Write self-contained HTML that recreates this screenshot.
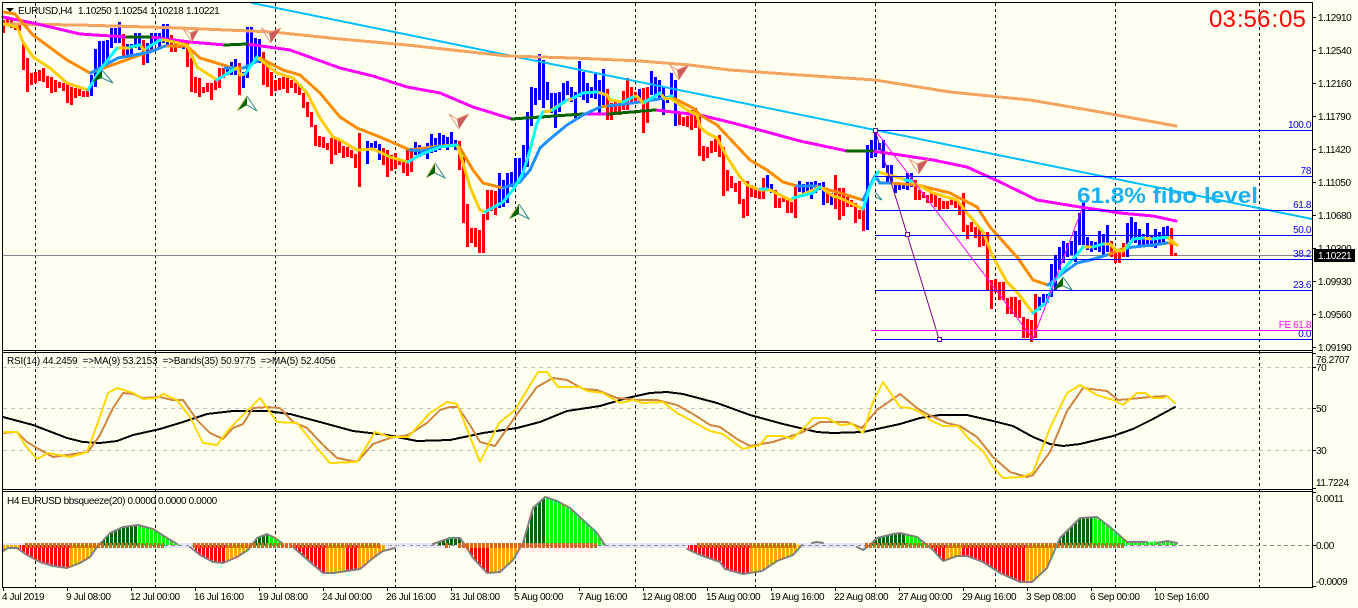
<!DOCTYPE html>
<html><head><meta charset="utf-8"><title>EURUSD,H4</title>
<style>
html,body{margin:0;padding:0;background:#FFFFF0;width:1358px;height:608px;overflow:hidden}
svg{display:block}
text{font-family:"Liberation Sans",sans-serif;font-size:10px;letter-spacing:-.4px;fill:#000}
.c{shape-rendering:crispEdges}
.l{fill:none;stroke-linejoin:round;stroke-linecap:round}
.f{fill:#0000FF;text-anchor:end}
</style></head><body>
<svg width="1358" height="608" viewBox="0 0 1358 608" xmlns="http://www.w3.org/2000/svg">
<defs>
<clipPath id="hc"><path d="M3 545L3 551 8 548 17 548 27 555 40 562 53 566 67 568 80 563 90 557 97 547 110 533 123 527 138 525 153 529 167 538 177 544 190 547 200 555 213 562 223 563 237 557 248 550 257 538 267 534 275 538 283 544 293 547 310 562 323 573 333 573 347 571 360 569 373 558 383 551 400 548 413 549 433 544 450 538 460 538 465 545 473 558 487 573 500 572 513 560 523 543 533 508 545 497 557 501 570 508 583 520 597 533 605 545 685 545 687 549 700 555 720 562 725 569 743 574 762 571 777 561 793 555 802 545 853 545 863 550 877 538 893 534 900 533 917 537 927 545 933 550 943 561 957 556 967 556 983 562 1000 573 1020 582 1032 582 1047 568 1060 538 1080 518 1097 517 1110 527 1127 542 1147 542 1167 541 1177 543 1177 545Z"/></clipPath>
</defs>
<rect width="1358" height="608" fill="#FFFFF0"/>

<!-- grid -->
<path class="c" stroke="#000" stroke-dasharray="3 3" fill="none" d="M35.5 3V587M155.5 3V587M275.5 3V587M395.5 3V587M515.5 3V587M635.5 3V587M755.5 3V587M875.5 3V587M995.5 3V587M1115.5 3V587M1259.5 3V587"/>

<!-- price line -->
<path class="c" stroke="#808890" d="M3 255.5H1312"/>

<!-- bars -->
<g class="c" fill="none" stroke-width="3" transform="translate(.5 0)">
<path stroke="#FF0000" d="M3 20V33M7 18V26M11 20V28M15 24V30M19 25V31M23 43V70M27 58V92M31 73V85M35 72V83M39 70V81M43 68V82M47 76V88M51 77V93M55 80V92M59 82V88M63 83V91M67 84V103M71 87V105M75 88V98M79 89V96M83 91V97M87 91V97M123 34V57M143 40V65M171 35V52M175 42V52M179 44V48M187 43V67M191 58V92M195 77V93M199 78V97M203 87V93M207 83V92M211 83V100M215 80V90M219 68V88M223 68V78M239 63V95M263 52V85M267 65V87M271 72V96M275 80V91M279 78V90M283 77V89M287 78V93M291 80V88M295 83V93M299 85V95M303 93V108M307 102V117M311 112V127M315 125V146M319 136V147M323 137V148M327 143V150M331 138V164M335 138V155M339 140V153M343 146V158M347 147V157M351 150V158M355 154V168M359 133V187M383 148V165M387 150V177M391 155V171M395 153V169M399 160V165M403 162V173M407 150V176M411 148V172M459 141V170M463 157V223M467 204V247M471 228V243M475 228V247M479 230V253M483 214V253M487 190V220M491 190V211M495 191V215M607 89V120M611 103V120M615 102V112M619 103V115M623 91V110M627 78V110M631 87V103M635 92V102M643 88V133M647 87V123M679 113V125M683 117V126M687 116V127M691 110V130M695 108V128M699 117V156M703 146V161M707 147V158M711 141V153M715 139V152M719 135V157M723 147V196M727 170V191M731 176V188M735 183V192M739 181V204M743 199V218M747 181V216M751 185V197M755 187V198M759 190V199M763 178V199M775 190V208M779 198V208M783 198V202M787 200V213M791 202V213M795 186V218M827 192V203M835 175V209M839 188V220M843 188V216M847 197V207M851 200V207M855 203V223M859 210V219M863 208V231M915 180V200M919 190V200M923 192V198M927 195V203M931 192V203M935 193V207M939 198V211M943 201V209M947 201V209M951 199V205M955 199V208M959 203V215M963 193V232M967 225V239M971 222V232M975 227V238M979 228V247M983 232V246M987 232V290M991 280V309M995 279V292M999 282V300M1003 282V300M1007 298V314M1011 297V314M1015 297V317M1019 300V318M1023 317V338M1027 319V338M1031 320V342M1035 294V338M1111 241V257M1115 252V263M1119 252V263M1123 243V257M1171 228V256M1175 253V256"/>
<path stroke="#0000FF" d="M91 75V96M95 49V87M99 41V77M103 41V68M107 40V67M111 28V48M115 28V43M119 22V43M127 44V57M131 44V55M135 33V48M139 33V50M147 43V63M151 33V50M155 33V43M159 33V47M163 24V43M167 24V45M183 40V49M227 65V75M231 62V75M235 59V75M243 72V88M247 27V78M251 27V63M255 38V58M259 39V63M367 141V164M371 143V150M375 141V148M379 144V160M415 142V155M419 145V157M423 149V155M427 143V159M431 134V153M435 138V152M439 133V150M443 135V148M447 137V150M451 132V147M455 140V150M499 173V208M503 180V207M507 173V203M511 172V187M515 158V187M519 158V180M523 145V175M527 112V167M531 87V126M535 88V105M539 54V100M543 60V108M547 82V100M551 93V113M555 93V128M559 92V112M563 83V103M567 81V95M571 87V102M575 92V118M579 61V97M583 72V100M587 83V103M591 87V98M595 74V99M599 80V113M603 69V107M639 89V103M651 71V95M655 77V97M659 80V100M663 87V115M667 98V103M671 73V97M675 80V126M767 175V190M771 184V193M799 181V192M803 184V193M807 182V195M811 182V199M815 181V193M819 183V190M823 182V205M831 193V205M867 145V230M871 140V158M875 133V157M879 143V150M883 140V168M887 165V184M891 165V184M895 185V193M899 185V190M903 183V189M907 173V190M911 173V187M1039 297V310M1043 294V303M1047 294V303M1051 264V297M1055 255V290M1059 247V270M1063 241V263M1067 243V257M1071 241V255M1075 231V262M1079 213V245M1083 202V245M1087 237V250M1091 241V252M1095 242V250M1099 231V252M1103 234V255M1107 225V252M1127 223V257M1131 217V243M1135 222V243M1139 229V245M1143 234V245M1147 223V245M1151 235V247M1155 229V248M1159 232V243M1163 227V242M1167 226V238"/>
</g>

<!-- trend line -->
<path class="c l" stroke="#00BFFF" stroke-width="2" d="M252 3L1312 219"/>

<!-- MAs -->
<path class="c l" stroke="#F4A460" stroke-width="3" d="M3 24L80 25 180 28 273 32 340 39 407 45 507 56 573 58 640 61 690 65 730 70 800 75 875 80 950 92 1030 100 1100 112 1176 126"/>
<path class="c l" stroke="#FF00FF" stroke-width="3" d="M3 17L33 23 80 34 127 37 150 37 190 42 225 45 247 44 290 50 340 68 373 76 407 87 440 93 473 107 512 119 583 114 608 114 655 110 700 115 733 123 767 132 800 141 847 151 872 151 900 155 933 160 967 167 1000 182 1037 200 1080 207 1120 213 1153 216 1176 221"/>
<path class="c l" stroke="#006400" stroke-width="3" d="M127 37H150M225 45L247 44M512 119L583 114M608 114L655 110M847 151H872"/>
<path class="c l" stroke="#FF8C00" stroke-width="3" d="M3 12L15 14 33 35 67 60 90 73 165 46 187 46 200 58 233 68 243 68 258 61 260 58 283 70 300 75 320 93 340 117 357 128 380 137 410 150 440 146 457 145 460 148 473 170 483 183 503 188 520 182 530 170 540 148 550 139 567 125 583 115 600 107 625 104 640 102 653 100 670 97 673 98 693 108 700 115 717 125 733 142 750 160 767 170 783 182 797 186 815 186 840 193 863 200 875 176 880 183 890 183 917 185 950 193 977 207 990 227 1017 257 1033 280 1048 285 1063 273 1077 263 1090 260 1107 255 1125 248 1143 246 1153 245 1167 243 1176 244"/>
<path class="c l" stroke="#1E90FF" stroke-width="3" d="M91 73L105 65 118 58 135 55 150 52 165 46M225 68H235M243 68L258 61M410 150L423 151 440 146M503 188L520 182 530 170 540 148 550 139 567 125 583 115 600 107M608 106L625 104 640 102M645 101L653 100 670 97M797 186L815 186M863 200L875 176 880 183 890 183M1048 285L1063 273 1077 263 1090 260 1107 255M1125 248L1143 246 1153 245 1167 243"/>
<path class="c l" stroke="#FFCC00" stroke-width="3" d="M3 24L17 27 23 42 33 57 50 68 67 83 88 90 100 70 117 48 128 48 140 45 144 50 147 48 160 40 165 40 187 45 197 67 217 80 233 70 237 68 240 75 245 74 257 57 277 73 293 78 307 93 320 118 333 137 340 140 357 150 373 149 390 157 408 162 420 155 440 147 457 145 463 163 470 187 480 210 485 212 503 202 513 190 523 173 530 150 537 123 543 112 550 111 567 100 572 99 583 93 597 92 607 95 610 100 623 102 633 97 637 96 643 103 660 93 665 99 670 98 687 110 697 115 700 127 707 133 717 138 727 157 740 177 747 185 760 190 770 190 790 200 820 187 833 196 840 198 863 209 870 187 878 172 900 178 910 181 933 193 957 200 967 213 983 232 993 257 1007 282 1017 292 1033 313 1047 302 1053 283 1063 270 1075 257 1083 247 1093 247 1103 244 1110 244 1117 251 1123 251 1133 239 1143 238 1153 239 1167 237 1177 245"/>
<path class="c l" stroke="#00FFFF" stroke-width="3" d="M88 90L100 70 117 48M130 47L140 45M147 48L160 40M217 80L233 70M245 74L257 57M408 162L420 155 440 147 457 145M485 212L503 202 513 190 523 173 530 150 537 123 543 112M553 110L567 100M573 98L583 93 597 92M623 102L633 97M645 102L660 93M670 96L672 96M760 189L767 189M793 198L813 193 820 187M863 209L870 187 878 172M905 180L912 181M1033 313L1047 302 1053 283 1063 270 1075 257 1083 247M1093 247L1103 244M1127 248L1133 239 1143 238M1153 239L1167 237"/>

<!-- arrows -->
<g>
<path fill="#006400" d="M102 70L92 82 102 78Z"/><path fill="none" stroke="#2E8B8B" d="M102 70L113 83 102 78"/>
<path fill="#006400" d="M247 96L237 111 247 105Z"/><path fill="none" stroke="#2E8B8B" d="M247 96L257 111 247 105"/><path fill="none" stroke="#BDB76B" d="M237 111L247 96"/>
<path fill="#006400" d="M435 163L426 178 435 173Z"/><path fill="none" stroke="#2E8B8B" d="M435 163L445 178 435 173"/><path fill="none" stroke="#BDB76B" d="M426 178L435 163"/>
<path fill="#006400" d="M519 204L509 219 519 214Z"/><path fill="none" stroke="#2E8B8B" d="M519 204L529 219 519 214"/><path fill="none" stroke="#BDB76B" d="M509 219L519 204"/>
<path fill="#006400" d="M1063 277L1053 290 1063 286Z"/><path fill="none" stroke="#2E8B8B" d="M1063 277L1072 290 1063 286"/>
<path fill="none" stroke="#2E8B8B" d="M875 192L882 200 875 197"/>
<path fill="#CD5C5C" d="M199 29L192 42 190 33Z"/><path fill="none" stroke="#E9967A" d="M199 29L190 33 183 29 192 42"/>
<path fill="#CD5C5C" d="M281 28L271 43 269 33Z"/><path fill="none" stroke="#E9967A" d="M281 28L269 33 261 28 271 43"/>
<path fill="#CD5C5C" d="M469 114L459 129 457 119Z"/><path fill="none" stroke="#E9967A" d="M469 114L457 119 449 114 459 129"/>
<path fill="#CD5C5C" d="M689 65L679 80 677 70Z"/><path fill="none" stroke="#E9967A" d="M689 65L677 70 670 65 679 80"/>
<path fill="#CD5C5C" d="M929 159L919 174 917 164Z"/><path fill="none" stroke="#E9967A" d="M929 159L917 164 909 159 919 174"/>
</g>

<!-- fibo -->
<path class="c" stroke="#0000FF" d="M875 130.5H1312M875 176.5H1312M875 210.5H1312M875 235.5H1312M875 259.5H1312M875 290.5H1312M875 339.5H1312"/>
<path class="c" stroke="#FF00FF" d="M871 330.5H1312"/>
<path fill="none" stroke="#FF00FF" stroke-width="1" d="M875 130L1033 339 1083 206"/>
<path fill="none" stroke="#800080" stroke-width="1" d="M875 130L907 234 939 339"/>
<path class="c" fill="#FFFFF0" stroke="#800080" d="M873.5 128.5h4v4h-4zM905.5 232.5h4v4h-4zM937.5 337.5h4v4h-4z"/>
<text class="f" x="1311" y="128">100.0</text>
<text class="f" x="1311" y="174">78</text>
<text class="f" x="1311" y="208">61.8</text>
<text class="f" x="1311" y="233">50.0</text>
<text class="f" x="1311" y="257">38.2</text>
<text class="f" x="1311" y="288">23.6</text>
<text class="f" x="1311" y="328" style="fill:#FF00FF">FE 61.8</text>
<text class="f" x="1311" y="337">0.0</text>

<text x="1077" y="203" textLength="181" lengthAdjust="spacingAndGlyphs" style="font-size:22px;font-weight:bold;fill:#18B0F0;letter-spacing:0">61.8% fibo level</text>
<text x="1209 1222.5 1237 1243.5 1257 1271.5 1279 1292.5" y="27" style="font-size:24px;fill:#FF0000;letter-spacing:0">03:56:05</text>

<!-- header -->
<path d="M6 8h8l-4 4z" fill="#000"/>
<text x="18" y="14">EURUSD,H4</text>
<text x="78" y="14">1.10250</text>
<text x="114" y="14">1.10254</text>
<text x="150" y="14">1.10218</text>
<text x="186" y="14">1.10221</text>

<!-- RSI pane -->
<path class="c" stroke="#C0C0C0" stroke-dasharray="4 4" d="M3 367.5H1312M3 408.5H1312M3 450.5H1312"/>
<path class="c l" stroke="#000" stroke-width="2" d="M3 417L33 425 67 438 83 442 100 443 117 441 133 435 160 429 183 422 207 414 233 411 267 411 290 414 320 422 353 431 387 435 417 441 450 440 483 433 517 428 540 422 567 411 600 406 627 398 650 393 667 392 683 394 717 403 750 415 783 424 817 432 833 433 863 432 900 424 920 418 940 415 967 415 993 421 1013 426 1033 437 1050 444 1063 446 1080 444 1113 436 1133 429 1153 419 1175 407"/>
<path class="c l" stroke="#CD853F" stroke-width="2" d="M3 433L17 432 27 442 37 448 53 457 67 455 88 452 100 435 113 408 123 393 133 394 143 398 160 397 172 400 183 400 197 420 210 433 223 439 233 428 243 424 253 408 267 407 280 408 293 422 307 428 323 445 337 458 357 462 373 444 390 438 408 435 427 423 440 410 450 407 458 407 470 425 480 442 495 446 515 417 537 387 553 378 567 380 583 389 597 390 617 398 637 400 657 400 677 405 693 414 710 425 720 427 737 439 750 446 773 442 803 432 820 422 847 422 862 428 877 410 900 394 917 408 927 414 947 423 960 426 977 437 993 457 1010 472 1027 477 1033 475 1050 452 1067 411 1083 388 1107 391 1118 400 1130 399 1150 397 1167 396 1175 403"/>
<path class="c l" stroke="#FFD700" stroke-width="2" d="M3 432L17 432 25 445 37 459 48 453 70 457 87 452 97 425 108 393 117 388 133 393 143 399 157 398 163 394 177 400 190 417 203 443 217 445 230 428 243 415 260 398 277 422 297 423 317 448 330 463 357 462 375 432 390 437 408 437 430 413 447 402 457 404 480 462 499 423 515 410 538 372 547 372 558 387 580 387 587 391 603 393 620 403 633 400 643 403 663 402 677 413 690 420 710 431 723 434 743 449 760 445 767 436 783 436 792 439 807 425 813 418 827 418 840 425 852 424 863 433 873 402 883 382 900 407 910 408 920 412 930 420 943 426 958 426 970 440 983 451 993 467 1003 478 1023 477 1033 472 1050 428 1067 393 1080 385 1097 395 1113 400 1123 405 1137 393 1145 393 1153 398 1163 398 1167 396 1175 403"/>
<text x="7" y="364" style="letter-spacing:-.2px">RSI(14) 44.2459 &#160;=&gt;MA(9) 53.2153 &#160;=&gt;Bands(35) 50.9775 &#160;=&gt;MA(5) 52.4056</text>

<!-- squeeze pane -->
<path class="c" stroke="#E6E6FA" stroke-width="5" d="M3 545.5H25M164 545.5H193M380 545.5H445M597 545.5H697M797 545.5H865M1125 545.5H1177"/>
<path class="c" stroke="#808890" stroke-dasharray="4 3" d="M3 545.5H1312"/>
<g clip-path="url(#hc)" class="c">
<rect x="0" y="490" width="20" height="97" fill="#FFA500"/>
<rect x="20" y="490" width="50" height="97" fill="#FF0000"/>
<rect x="70" y="490" width="28" height="97" fill="#FFA500"/>
<rect x="98" y="490" width="39" height="97" fill="#006400"/>
<rect x="137" y="490" width="43" height="97" fill="#00FF00"/>
<rect x="195" y="490" width="30" height="97" fill="#FF0000"/>
<rect x="225" y="490" width="27" height="97" fill="#FFA500"/>
<rect x="252" y="490" width="16" height="97" fill="#006400"/>
<rect x="268" y="490" width="16" height="97" fill="#00FF00"/>
<rect x="295" y="490" width="30" height="97" fill="#FF0000"/>
<rect x="325" y="490" width="20" height="97" fill="#FFA500"/>
<rect x="345" y="490" width="12" height="97" fill="#FF0000"/>
<rect x="357" y="490" width="28" height="97" fill="#FFA500"/>
<rect x="437" y="490" width="25" height="97" fill="#006400"/>
<rect x="465" y="490" width="24" height="97" fill="#FF0000"/>
<rect x="489" y="490" width="33" height="97" fill="#FFA500"/>
<rect x="522" y="490" width="23" height="97" fill="#006400"/>
<rect x="545" y="490" width="62" height="97" fill="#00FF00"/>
<rect x="688" y="490" width="61" height="97" fill="#FF0000"/>
<rect x="749" y="490" width="53" height="97" fill="#FFA500"/>
<rect x="868" y="490" width="37" height="97" fill="#006400"/>
<rect x="905" y="490" width="24" height="97" fill="#00FF00"/>
<rect x="931" y="490" width="14" height="97" fill="#FF0000"/>
<rect x="945" y="490" width="17" height="97" fill="#FFA500"/>
<rect x="962" y="490" width="63" height="97" fill="#FF0000"/>
<rect x="1025" y="490" width="33" height="97" fill="#FFA500"/>
<rect x="1058" y="490" width="34" height="97" fill="#006400"/>
<rect x="1092" y="490" width="38" height="97" fill="#00FF00"/>
<rect x="1130" y="490" width="50" height="97" fill="#00FF00"/>
<path stroke="#FFFFF0" stroke-width="100" stroke-dasharray="1 3" fill="none" d="M1 545H1180"/>
</g>
<path class="l" fill="none" stroke="#808080" stroke-width="2" d="M3 551L8 548 17 548 27 555 40 562 53 566 67 568 80 563 90 557 97 547 110 533 123 527 138 525 153 529 167 538 177 544M190 547L200 555 213 562 223 563 237 557 248 550 257 538 267 534 275 538 283 544M293 547L310 562 323 573 333 573 347 571 360 569 373 558 383 551 395 548M433 544L450 538 460 538 465 545 473 558 487 573 500 572 513 560 523 543 533 508 545 497 557 501 570 508 583 520 597 533 605 545M687 549L700 555 720 562 725 569 743 574 762 571 777 561 793 555 802 545M812 543L817 542 823 543M857 547L863 550 870 545 877 538 893 534 900 533 917 537 927 545 933 550 943 561 957 556 967 556 983 562 1000 573 1020 582 1032 582 1047 568 1060 538 1080 518 1097 517 1110 527 1127 542 1147 542 M1157 543L1167 541 1177 543"/>
<path class="c" stroke="#D2691E" stroke-width="5" stroke-dasharray="3 1" d="M25 545.5H164M193 545.5H380M445 545.5H450M458 545.5H597M697 545.5H797M865 545.5H1125"/>
<text x="7" y="504">H4 EURUSD bbsqueeze(20) 0.0000 0.0000 0.0000</text>

<!-- frames -->
<path class="c" stroke="#000" fill="none" d="M2.5 2.5H1312.5V587.5H2.5ZM2.5 350.5H1312.5M2.5 352.5H1312.5M2.5 489.5H1312.5M2.5 491.5H1312.5"/>

<!-- axis ticks -->
<path class="c" stroke="#000" d="M1312 17.5h4M1312 50.5h4M1312 83.5h4M1312 116.5h4M1312 149.5h4M1312 182.5h4M1312 215.5h4M1312 248.5h4M1312 281.5h4M1312 314.5h4M1312 347.5h4M1312 353.5h4M1312 367.5h4M1312 408.5h4M1312 450.5h4M1312 488.5h4M1312 492.5h4M1312 545.5h4M1312 586.5h4M3.5 587v4M67.5 587v4M131.5 587v4M195.5 587v4M259.5 587v4M323.5 587v4M387.5 587v4M451.5 587v4M515.5 587v4M579.5 587v4M643.5 587v4M707.5 587v4M771.5 587v4M835.5 587v4M899.5 587v4M963.5 587v4M1027.5 587v4M1091.5 587v4M1155.5 587v4"/>

<!-- price axis -->
<text x="1318" y="21">1.12910</text>
<text x="1318" y="54">1.12540</text>
<text x="1318" y="87">1.12160</text>
<text x="1318" y="120">1.11790</text>
<text x="1318" y="153">1.11420</text>
<text x="1318" y="186">1.11050</text>
<text x="1318" y="219">1.10680</text>
<text x="1318" y="252">1.10300</text>
<text x="1318" y="285">1.09930</text>
<text x="1318" y="318">1.09560</text>
<text x="1318" y="351">1.09190</text>
<rect x="1314" y="249" width="41" height="13" fill="#000" class="c"/>
<text x="1318" y="259" style="fill:#fff">1.10221</text>

<text x="1316" y="363">76.2707</text>
<text x="1316" y="371">70</text>
<text x="1316" y="412">50</text>
<text x="1316" y="454">30</text>
<text x="1316" y="486">11.7224</text>
<text x="1316" y="502">0.0011</text>
<text x="1316" y="549">0.00</text>
<text x="1316" y="585">-0.0009</text>

<!-- time axis -->
<text x="2" y="600">4 Jul 2019</text>
<text x="66" y="600">9 Jul 08:00</text>
<text x="130" y="600">12 Jul 00:00</text>
<text x="194" y="600">16 Jul 16:00</text>
<text x="258" y="600">19 Jul 08:00</text>
<text x="322" y="600">24 Jul 00:00</text>
<text x="386" y="600">26 Jul 16:00</text>
<text x="450" y="600">31 Jul 08:00</text>
<text x="514" y="600">5 Aug 00:00</text>
<text x="578" y="600">7 Aug 16:00</text>
<text x="642" y="600">12 Aug 08:00</text>
<text x="706" y="600">15 Aug 00:00</text>
<text x="770" y="600">19 Aug 16:00</text>
<text x="834" y="600">22 Aug 08:00</text>
<text x="898" y="600">27 Aug 00:00</text>
<text x="962" y="600">29 Aug 16:00</text>
<text x="1026" y="600">3 Sep 08:00</text>
<text x="1090" y="600">6 Sep 00:00</text>
<text x="1154" y="600">10 Sep 16:00</text>
</svg>
</body></html>
